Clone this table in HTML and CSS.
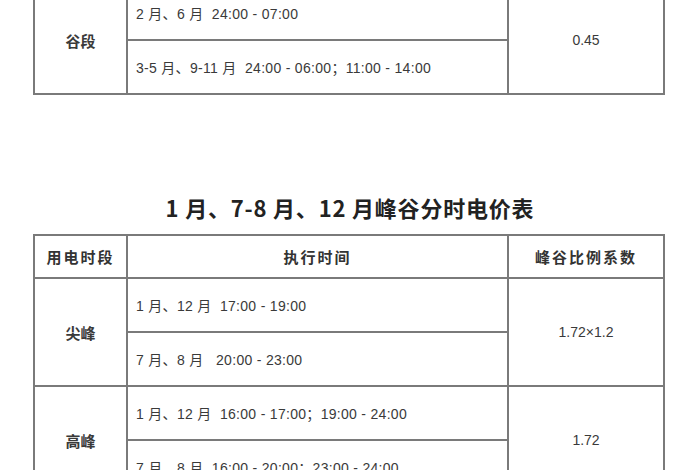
FILE: index.html
```html
<!DOCTYPE html>
<html>
<head>
<meta charset="utf-8">
<link rel="stylesheet" href="styles.css">
</head>
<body>
<div class="page">
  <table class="tbl tbl-top">
    <colgroup><col class="c1"><col class="c2"><col class="c3"></colgroup>
    <tr>
      <td class="name" rowspan="2">谷段</td>
      <td class="time">2 月、6 月 &nbsp;24:00 - 07:00</td>
      <td class="val" rowspan="2">0.45</td>
    </tr>
    <tr>
      <td class="time">3-5 月、9-11 月 &nbsp;24:00 - 06:00；11:00 - 14:00</td>
    </tr>
  </table>

  <h2 class="title">1 月、7-8 月、12 月峰谷分时电价表</h2>

  <table class="tbl">
    <colgroup><col class="c1"><col class="c2"><col class="c3"></colgroup>
    <tr class="head">
      <th>用电时段</th>
      <th>执行时间</th>
      <th>峰谷比例系数</th>
    </tr>
    <tr>
      <td class="name" rowspan="2">尖峰</td>
      <td class="time">1 月、12 月 &nbsp;17:00 - 19:00</td>
      <td class="val" rowspan="2">1.72×1.2</td>
    </tr>
    <tr>
      <td class="time">7 月、8 月 &nbsp;&nbsp;20:00 - 23:00</td>
    </tr>
    <tr>
      <td class="name" rowspan="2">高峰</td>
      <td class="time">1 月、12 月 &nbsp;16:00 - 17:00；19:00 - 24:00</td>
      <td class="val" rowspan="2">1.72</td>
    </tr>
    <tr>
      <td class="time">7 月、8 月 &nbsp;16:00 - 20:00；23:00 - 24:00</td>
    </tr>
  </table>
</div>
</body>
</html>
```

FILE: styles.css
```css
html, body {
  margin: 0;
  padding: 0;
  background: #ffffff;
  overflow: hidden;
}
.page {
  width: 700px;
  height: 470px;
  overflow: hidden;
  font-family: "Liberation Sans", "Noto Sans CJK SC", sans-serif;
  color: #333333;
}
.tbl {
  border-collapse: collapse;
  width: 630px;
  margin-left: 33px;
  table-layout: fixed;
}
.tbl-top {
  margin-top: -15px;
}
.c1 { width: 93px; }
.c2 { width: 381px; }
.c3 { width: 156px; }
.tbl td, .tbl th {
  border: 2px solid #7a7a7a;
  padding: 0;
  height: 52px;
  font-size: 14px;
  color: #3a3a3a;
}
.tbl .name {
  text-align: center;
  font-weight: bold;
  font-size: 15px;
  font-family: "Noto Sans CJK SC", sans-serif;
}
.tbl .time {
  padding-left: 8px;
  text-align: left;
  letter-spacing: 0.3px;
}
.tbl .val {
  text-align: center;
}
.tbl .head th {
  height: 41px;
  font-size: 15px;
  font-weight: bold;
  font-family: "Noto Sans CJK SC", sans-serif;
  color: #333333;
  letter-spacing: 2px;
}
.title {
  margin: 95px 0 10px 0;
  height: 34px;
  line-height: 34px;
  text-align: center;
  font-size: 22px;
  font-weight: bold;
  color: #222222;
  font-family: "Noto Sans CJK SC", sans-serif;
  letter-spacing: 0.8px;
}
```
